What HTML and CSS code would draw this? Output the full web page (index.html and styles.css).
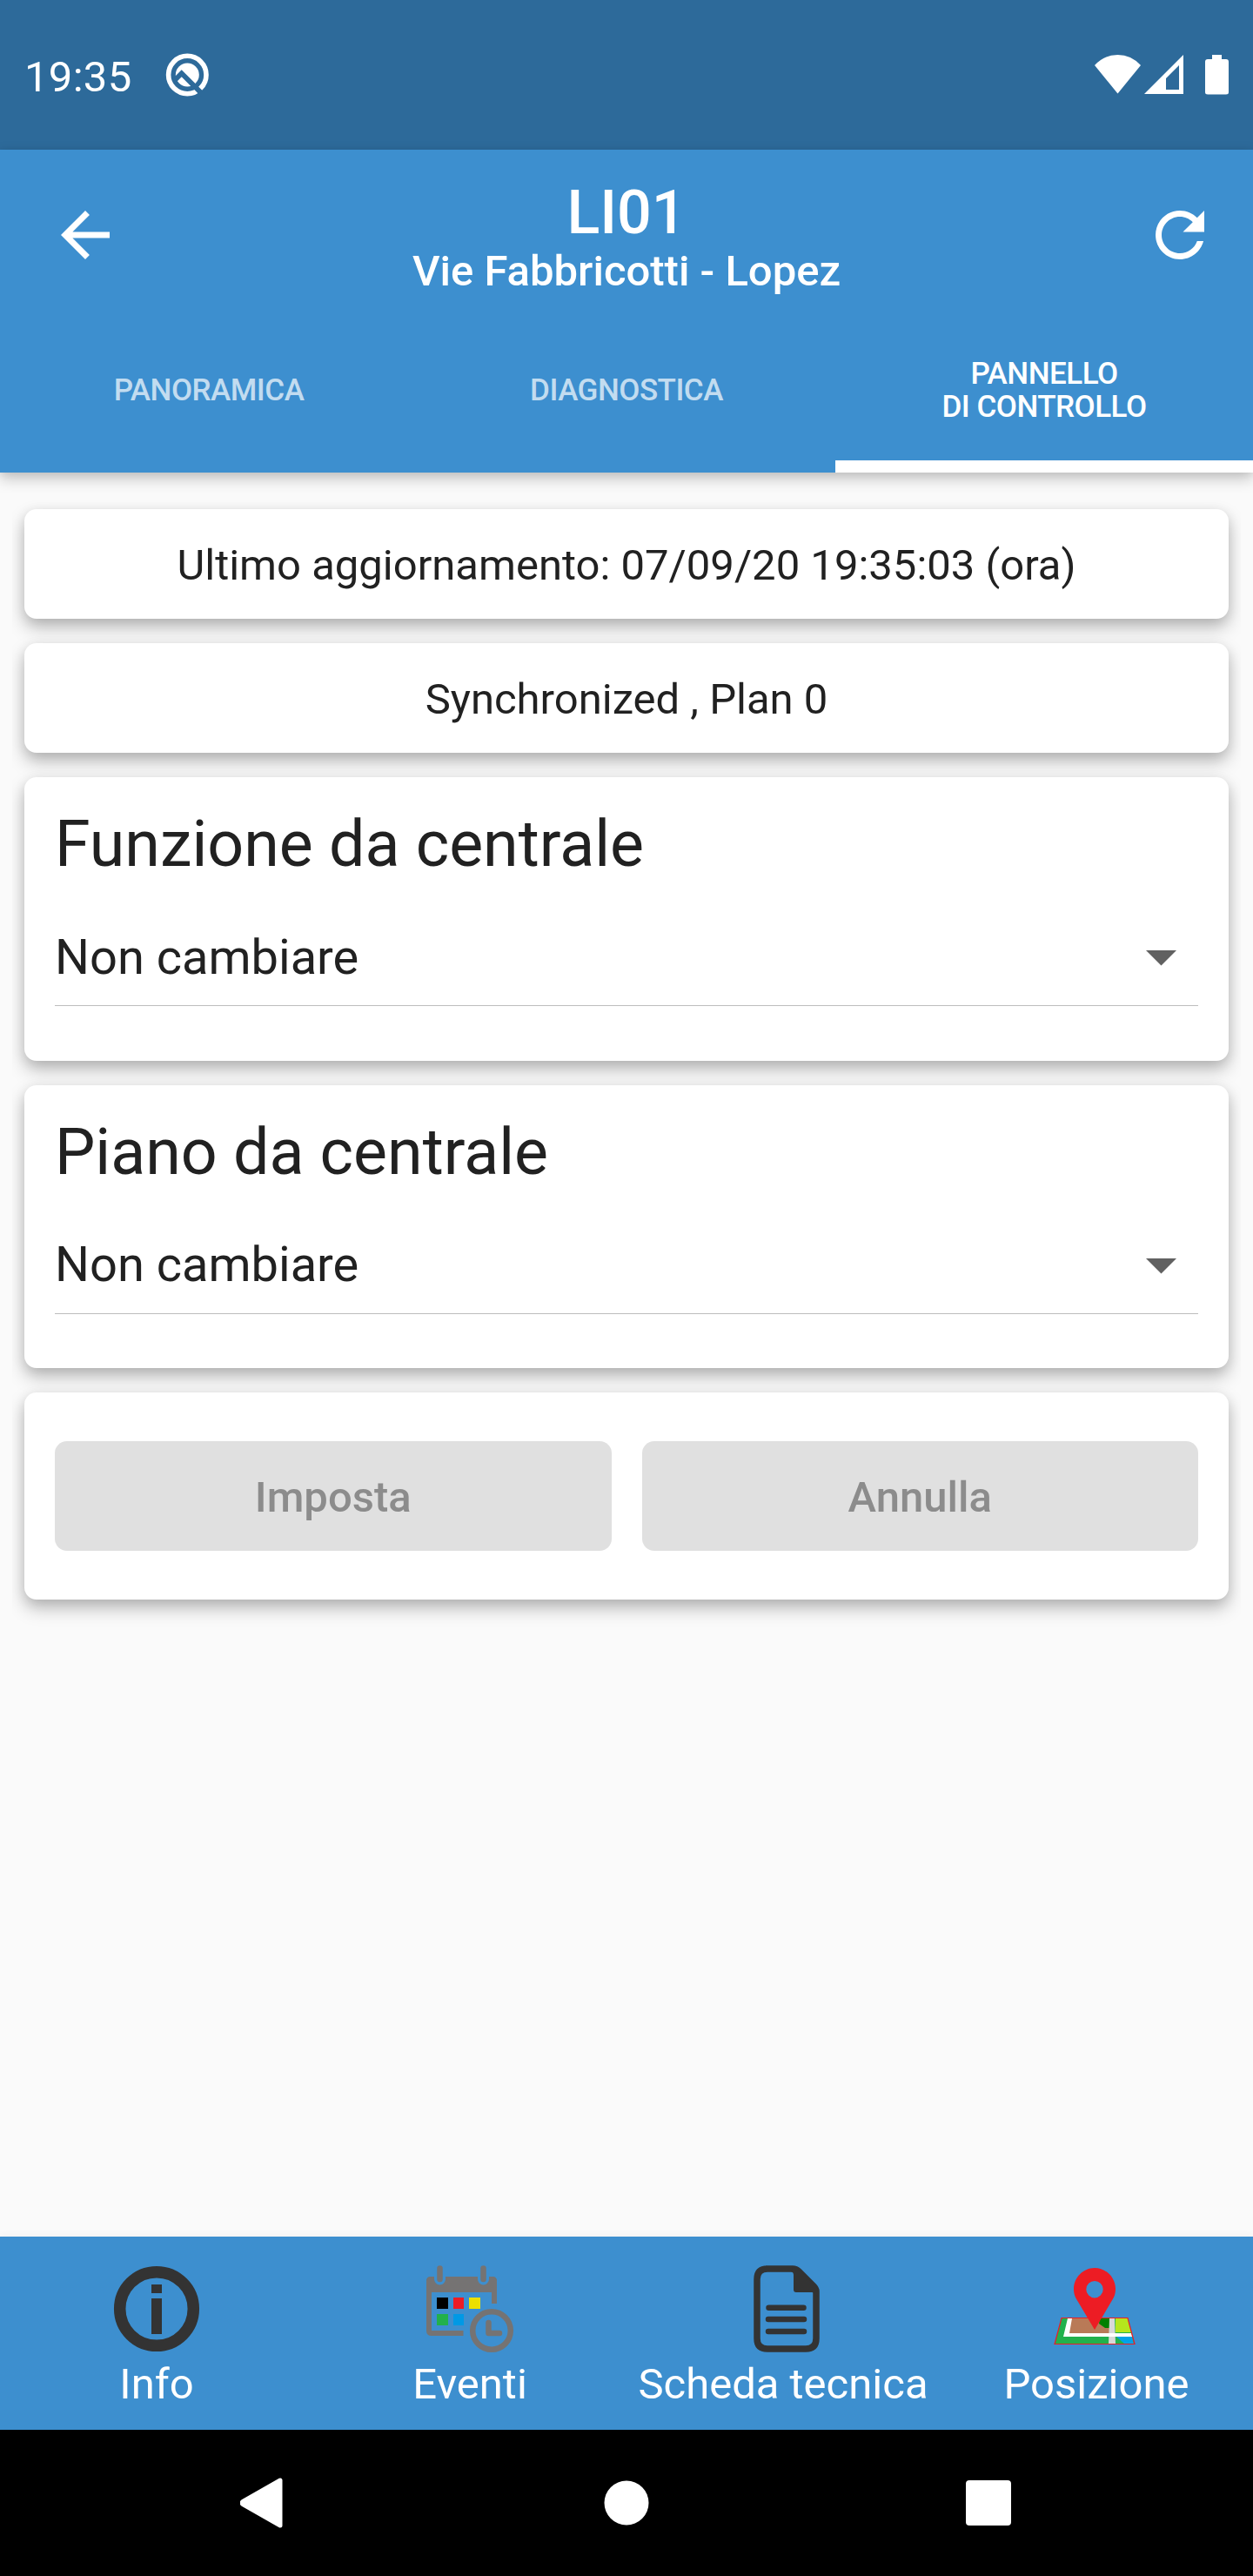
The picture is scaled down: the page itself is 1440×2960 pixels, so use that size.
FILE: index.html
```html
<!DOCTYPE html>
<html lang="it">
<head>
<meta charset="utf-8">
<title>LI01 - Pannello di controllo</title>
<link rel="stylesheet" href="styles.css">
</head>
<body>
<div class="status">
  <span class="clock">19:35</span>
  <svg width="50" height="50" viewBox="0 0 50 50">
    <circle cx="25.300" cy="25" r="21.700" fill="none" stroke="#fff" stroke-width="5.600"/>
    <circle cx="25.300" cy="25" r="13.500" fill="#fff"/>
    <path d="M11 31L18.700 23.300L43 47.600" fill="none" stroke="#2d6a9a" stroke-width="5.800"/>
  </svg>
  <svg class="signals" width="156" height="48" viewBox="-2 0 156 48">
    <g fill="#fff">
      <path d="M0 13Q11 1 26.500 1T53 13L26.500 45.500Z"/>
      <path fill-rule="evenodd" d="M57 46L102 1V46ZM82 28V41H97V13Z"/>
      <path d="M135 1H146V6H151Q154 6 154 9V44Q154 46.500 151 46.500H130Q127 46.500 127 44V9Q127 6 130 6H135Z"/>
    </g>
  </svg>
</div>
<header class="header">
  <div class="appbar">
    <svg width="84" height="84" viewBox="0 0 24 24" fill="#fff"><path d="M20 11H7.830l5.590-5.590L12 4l-8 8 8 8 1.410-1.410L7.830 13H20v-2z"/></svg>
    <div class="titles"><h1>LI01</h1><p>Vie Fabbricotti - Lopez</p></div>
    <svg width="84" height="84" viewBox="0 0 24 24" fill="#fff"><path d="M17.650 6.350C16.200 4.900 14.210 4 12 4c-4.420 0-7.990 3.580-7.990 8s3.570 8 7.990 8c3.730 0 6.840-2.550 7.730-6h-2.080c-.82 2.330-3.040 4-5.650 4-3.310 0-6-2.690-6-6s2.690-6 6-6c1.660 0 3.140.69 4.220 1.780L13 11h7V4l-2.350 2.350z"/></svg>
  </div>
  <nav class="tabs">
    <div class="tab">PANORAMICA</div>
    <div class="tab">DIAGNOSTICA</div>
    <div class="tab active">PANNELLO<br>DI CONTROLLO</div>
  </nav>
</header>
<main class="content">
  <section class="card note">Ultimo aggiornamento: 07/09/20 19:35:03 (ora)</section>
  <section class="card note">Synchronized , Plan 0</section>
  <section class="card field">
    <h2>Funzione da centrale</h2>
    <div class="select"><span>Non cambiare</span><svg width="35" height="18" viewBox="0 0 35 18"><path d="M0 0H35L17.500 17.500Z" fill="#616161"/></svg></div>
  </section>
  <section class="card field">
    <h2>Piano da centrale</h2>
    <div class="select"><span>Non cambiare</span><svg width="35" height="18" viewBox="0 0 35 18"><path d="M0 0H35L17.500 17.500Z" fill="#616161"/></svg></div>
  </section>
  <section class="card actions">
    <div class="button">Imposta</div>
    <div class="button">Annulla</div>
  </section>
</main>
<footer class="bottombar">
  <div class="item">
    <svg width="100" height="102" viewBox="0 0 100 102">
      <circle cx="50" cy="51" r="42.300" fill="none" stroke="#333" stroke-width="13.500"/>
      <path d="M44 23H56V33H44ZM44 39H56V80H44Z" fill="#333"/>
    </svg>
    <span>Info</span>
  </div>
  <div class="item">
    <svg width="102" height="102" viewBox="0 0 102 102">
      <path d="M43.500 79H7Q4 79 4 76V19Q4 17 6 17H77Q79 17 79 19V45" fill="none" stroke="#757373" stroke-width="6"/>
      <path d="M1 32V20Q1 14 7 14H76Q82 14 82 20V32Z" fill="#757373"/>
      <path d="M16.500 4V17M66.500 4V17" stroke="#3d8fcf" stroke-width="13" stroke-linecap="round"/>
      <path d="M16.500 4.500V17M66.500 4.500V17" stroke="#757373" stroke-width="6.500" stroke-linecap="round"/>
      <path d="M13 38H26V51H13Z" fill="#000"/><path d="M32 38H44V51H32Z" fill="#ed1c24"/>
      <path d="M50 38H63V51H50Z" fill="#ece000"/><path d="M13 57H26V70H13Z" fill="#22b14c"/>
      <path d="M32 57H44V70H32Z" fill="#0099e5"/>
      <circle cx="76" cy="76" r="21.800" fill="none" stroke="#757373" stroke-width="6.500"/>
      <path d="M72.500 67V79H85" fill="none" stroke="#757373" stroke-width="6.500" stroke-linecap="round" stroke-linejoin="round"/>
    </svg>
    <span>Eventi</span>
  </div>
  <div class="item">
    <svg class="doc-icon" width="78" height="102" viewBox="0 0 78 102">
      <path d="M15 5H46Q50 5 53 8L70 25Q73 28 73 31V85Q73 97 61 97H17Q5 97 5 85V17Q5 5 17 5Z" fill="none" stroke="#333" stroke-width="7.500"/>
      <path d="M46 4H51L75 28V38Q73 32 68 32H50Q47 32 47 29V12Q47 9 44 8Z" fill="#333"/>
      <path d="M18.500 49.700H58.500M18 63H59M18 77H59" stroke="#333" stroke-width="6.500" stroke-linecap="round"/>
    </svg>
    <span>Scheda tecnica</span>
  </div>
  <div class="item">
    <svg class="map-icon" width="94" height="102" viewBox="0 0 94 102">
      <path d="M9 62H85L93 92H1Z" fill="#22b14c"/>
      <path d="M16 62H64V79H18Z" fill="#b97a57"/>
      <path d="M16 62H21L18 79H89L90 83H11Z" fill="#fff"/>
      <path d="M53 62H64V73H59L52 68Z" fill="#008000"/>
      <path d="M71 62H85L89 78H71Z" fill="#b5e61d"/>
      <path d="M72 83H90L92 91H81Z" fill="#00a2e8"/>
      <path d="M64 62H70L71 91H63Z" fill="#d8d8d8"/>
      <path d="M62 79H89L90 83H62Z" fill="#fff"/>
      <path d="M9 61.500H85L93 91.500H1Z" fill="none" stroke="#ed1c24" stroke-width="1.200"/>
      <path fill-rule="evenodd" d="M47 4C60 4 71 15 71 28C71 35 69 38 66 43L47 75L28 43C25 38 23 35 23 28C23 15 34 4 47 4ZM47 19A9.700 9.700 0 1 0 47 38.400A9.700 9.700 0 1 0 47 19Z" fill="#ed1c24"/>
    </svg>
    <span>Posizione</span>
  </div>
</footer>
<nav class="sysnav">
  <svg width="52" height="60" viewBox="0 0 52 60"><path d="M46 4V56L3 31.500Q1 30 3 28.500Z" fill="#fff" stroke="#fff" stroke-width="5" stroke-linejoin="round"/></svg>
  <svg class="home" width="52" height="52" viewBox="0 0 52 52"><circle cx="26" cy="26" r="25.500" fill="#fff"/></svg>
  <svg width="52" height="52" viewBox="0 0 52 52"><rect width="52" height="52" rx="4" fill="#fff"/></svg>
</nav>
</body>
</html>
```
FILE: styles.css
```css
* { box-sizing: border-box; }
body {
  margin: 0;
  width: 1440px;
  height: 2960px;
  display: flex;
  flex-direction: column;
  background: #fafafa;
  color: #212121;
  font-family: Roboto, sans-serif;
}
h1, h2, p { margin: 0; }
svg { display: block; flex: none; }

.status {
  height: 172px;
  flex: none;
  display: flex;
  align-items: center;
  padding: 0 28px;
  background: #2d6a9a;
  color: #fff;
}
.clock { font-size: 49px; letter-spacing: 0.3px; width: 162px; padding-top: 4px; }
.signals { margin-left: auto; }

.header {
  height: 371px;
  flex: none;
  display: flex;
  flex-direction: column;
  background: #3d8fcf;
  color: #fff;
  position: relative;
  z-index: 1;
  box-shadow: 0 7px 16px rgba(0,0,0,.22), 0 2px 8px rgba(0,0,0,.06);
}
.appbar { height: 196px; display: flex; align-items: center; justify-content: space-between; padding: 0 42px 0 56px; }
.titles { text-align: center; font-weight: 500; margin-left: -14px; }
.titles h1 { font-size: 70px; line-height: 82px; font-weight: 500; padding-top: 2px; }
.titles p { font-size: 49px; line-height: 57px; margin-top: -2px; }
.tabs { flex: 1; display: grid; grid-template-columns: repeat(3, 1fr); }
.tab {
  display: flex;
  align-items: center;
  justify-content: center;
  padding-top: 1px;
  text-align: center;
  font-size: 35px;
  letter-spacing: -.5px;
  line-height: 38px;
  font-weight: 500;
  color: rgba(255,255,255,.7);
  border-bottom: 14px solid transparent;
}
.tab.active { color: #fff; border-bottom-color: #fff; }

.content {
  flex: 1;
  margin: 0 14px;
  padding: 42px 14px 0;
  display: flex;
  flex-direction: column;
  gap: 28px;
  overflow: hidden;
}
.card {
  flex: none;
  background: #fff;
  border-radius: 14px;
  box-shadow: 0 10px 20px rgba(0,0,0,.25), 0 3px 14px rgba(0,0,0,.09);
}
.note { height: 126px; display: flex; align-items: center; justify-content: center; font-size: 49px; padding-top: 2px; }
.field { height: 325.500px; padding: 35px 35px 0; }
.field h2 { font-size: 73.500px; line-height: 84px; font-weight: 400; }
.select { height: 109px; margin-top: 35px; display: flex; align-items: center; justify-content: space-between; padding-right: 25px; border-bottom: 1px solid #bdbdbd; font-size: 56px; }
.select span { margin-bottom: 3px; }
.actions { height: 238px; padding: 56px 35px; display: flex; gap: 35px; }
.button { flex: 1; height: 126px; border-radius: 14px; background: #e0e0e0; color: #8c8c8c; display: flex; align-items: center; justify-content: center; font-size: 49px; font-weight: 500; padding-top: 2px; }

.bottombar { height: 222px; flex: none; background: #3d8fcf; color: #fff; display: flex; padding-top: 32px; box-shadow: 0 0 10px rgba(0,0,0,.06); }
.item { width: 360px; display: flex; flex-direction: column; align-items: center; gap: 5px; font-size: 49px; line-height: 62px; white-space: nowrap; }
.doc-icon { margin-left: 7px; }
.map-icon { margin-right: 4px; }
.sysnav { height: 168px; flex: none; background: #000; display: flex; align-items: center; justify-content: space-between; padding: 0 278px 0 276px; }
.home { margin-left: 2px; }
```
